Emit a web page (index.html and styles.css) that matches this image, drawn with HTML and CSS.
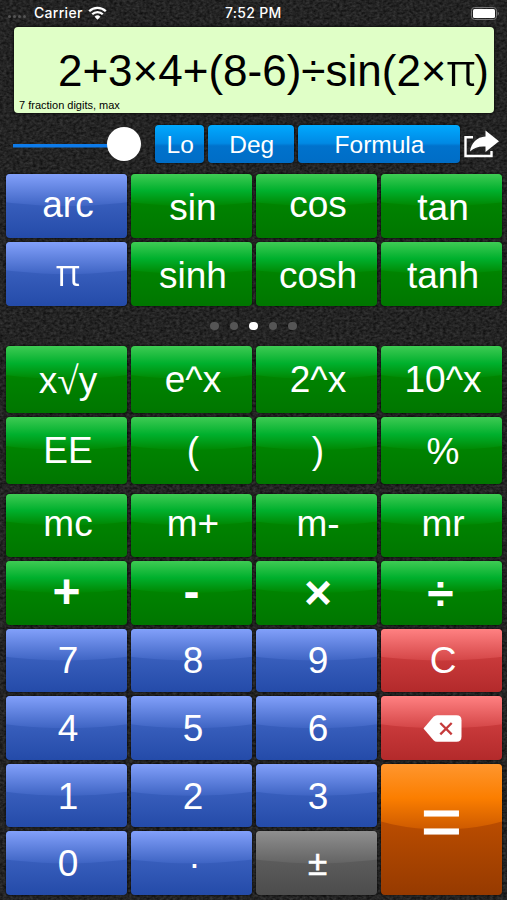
FILE: index.html
```html
<!DOCTYPE html>
<html lang="en">
<head>
    <meta charset="UTF-8">
    <title>Calculator</title>
    <link rel="stylesheet" href="styles.css">
</head>
<body>
<div class="status">
    <div class="status-left">
        <span class="signal"><i></i><i></i><i></i><i></i></span>
        <span class="carrier">Carrier</span>
        <svg class="wifi" viewBox="0 0 19 14" width="19" height="14">
            <path d="M1.2 5.2a11.8 11.8 0 0 1 16.6 0M4.2 8.3a7.5 7.5 0 0 1 10.6 0" fill="none" stroke="#fff" stroke-width="2.3"/>
            <path d="M9.5 13.7L6.6 10.8a4.1 4.1 0 0 1 5.8 0z" fill="#fff"/>
        </svg>
    </div>
    <span class="time">7:52 PM</span>
    <svg class="battery" viewBox="0 0 28 13" width="28" height="13">
        <rect x="0.5" y="0.5" width="25" height="12" rx="3" fill="none" stroke="#777"/>
        <rect x="2" y="2" width="22" height="9" rx="1.5" fill="#fff"/>
        <path d="M26.6 4.5v4a2.2 2.2 0 0 0 0-4z" fill="#777"/>
    </svg>
</div>

<div class="display">
    <p class="formula">2+3×4+(8-6)÷sin(2×<span class="pi">π</span>)</p>
    <p class="hint">7 fraction digits, max</p>
</div>

<div class="toolbar">
    <div class="slider"><span class="thumb"></span></div>
    <div class="tool lo">Lo</div>
    <div class="tool deg">Deg</div>
    <div class="tool form">Formula</div>
    <svg class="share" viewBox="0 0 36 28" width="36" height="28">
        <path d="M9 7.2H1.5V26H27.500V21" fill="none" stroke="#fff" stroke-width="2.4"/>
        <path d="M21.500 0.500L35 11.300L21.500 22V16.500C15 16 10.500 17.500 6 21.500C7 13 13 7 21.500 6.500z" fill="#fff"/>
    </svg>
</div>

<div class="keys trig">
    <div class="key blue up">arc</div>
    <div class="key green low">sin</div>
    <div class="key green up">cos</div>
    <div class="key green low">tan</div>
    <div class="key blue up"><span class="pi">π</span></div>
    <div class="key green low">sinh</div>
    <div class="key green low">cosh</div>
    <div class="key green low">tanh</div>
</div>

<div class="dots"><i></i><i></i><i class="on"></i><i></i><i></i></div>

<div class="keys power">
    <div class="key green low">x<span class="root">√</span>y</div>
    <div class="key green">e^x</div>
    <div class="key green">2^x</div>
    <div class="key green">10^x</div>
    <div class="key green">EE</div>
    <div class="key green">(</div>
    <div class="key green">)</div>
    <div class="key green low">%</div>
</div>

<div class="keys pad">
    <div class="key green up">mc</div>
    <div class="key green up">m+</div>
    <div class="key green up">m-</div>
    <div class="key green up">mr</div>
    <div class="key green op">+</div>
    <div class="key green op">-</div>
    <div class="key green op times">×</div>
    <div class="key green op divide">÷</div>
    <div class="key blue">7</div>
    <div class="key blue">8</div>
    <div class="key blue">9</div>
    <div class="key red">C</div>
    <div class="key blue">4</div>
    <div class="key blue">5</div>
    <div class="key blue">6</div>
    <div class="key red del">
        <svg viewBox="0 0 39 27" width="39" height="27">
            <path d="M0.500 13.500L10.500 1.800Q12 0.300 14 0.300H33.500Q38.500 0.300 38.500 5.300V21.700Q38.500 26.700 33.500 26.700H14Q12 26.700 10.500 25.200z" fill="#fff"/>
            <path d="M17.300 8L28.700 19.400M28.700 8L17.300 19.400" stroke="#c53a3b" stroke-width="2.300"/>
        </svg>
    </div>
    <div class="key blue">1</div>
    <div class="key blue">2</div>
    <div class="key blue">3</div>
    <div class="key orange equals">=</div>
    <div class="key blue">0</div>
    <div class="key blue point">·</div>
    <div class="key gray sign">±</div>
</div>
</body>
</html>
```
FILE: styles.css
```css
*{
    margin: 0;
    padding: 0;
    box-sizing: border-box;
}
body{
    width: 507px;
    height: 900px;
    overflow: hidden;
    color: #fff;
    font-family: "Liberation Sans", Arial, sans-serif;
    /* leather grain */
    background: #222 url("data:image/svg+xml,%3Csvg xmlns='http://www.w3.org/2000/svg' width='507' height='900'%3E%3Cfilter id='g' x='0' y='0' width='100%25' height='100%25' color-interpolation-filters='sRGB'%3E%3CfeTurbulence type='fractalNoise' baseFrequency='0.3 0.4' numOctaves='2' seed='4'/%3E%3CfeColorMatrix values='0.22 0 0 0 0.03 0.22 0 0 0 0.03 0.22 0 0 0 0.03 0 0 0 0 1'/%3E%3C/filter%3E%3Crect width='507' height='900' filter='url(%23g)'/%3E%3C/svg%3E");
}
.status{
    display: flex;
    justify-content: space-between;
    align-items: center;
    height: 26px;
    padding: 0 8px;
    font: 500 14px/26px Inter, sans-serif;
    letter-spacing: 0.3px;
}
.status-left{
    display: flex;
    align-items: center;
    width: 217px;
}
.signal{
    display: flex;
    gap: 2px;
    width: 26px;
    padding-top: 6px;
}
.signal i{
    width: 3px;
    height: 3px;
    border-radius: 50%;
    background: #555;
}
.wifi{
    margin-left: 5px;
}
.time{
    flex: 1;
}
.display{
    display: flex;
    flex-direction: column;
    justify-content: space-between;
    width: 480px;
    height: 86px;
    margin: 0.5px 0 0 14px;
    padding: 21px 5px 2px 5px;
    border-radius: 4px;
    background: #e0ffc7;
    box-shadow: 0 0 2px 1px #111;
    color: #000;
}
.formula{
    font-size: 44px;
    line-height: 44px;
    text-align: right;
    white-space: nowrap;
}
.hint{
    font-size: 11px;
    line-height: 12px;
}
.toolbar{
    display: flex;
    align-items: center;
    height: 39px;
    margin: 12px 0 0 13px;
}
.slider{
    display: flex;
    align-items: center;
    justify-content: flex-end;
    width: 128px;
    height: 39px;
    margin-right: 13.5px;
    background: linear-gradient(#0d7bea, #0d7bea) 0 55% / 110px 3.5px no-repeat;
}
.thumb{
    width: 34px;
    height: 34px;
    border-radius: 50%;
    background: #fff;
}
.tool{
    height: 38.5px;
    margin-right: 4px;
    padding-left: 2px;
    border-radius: 4px;
    background: linear-gradient(#00a9ff, #0089e4 48%, #0072cc 55%, #006dc6);
    box-shadow: 0 0 2px #000;
    font-size: 24.5px;
    line-height: 40px;
    text-align: center;
}
.lo{
    width: 49.5px;
}
.deg{
    width: 85.5px;
}
.form{
    width: 162px;
}
.pi{
    display: inline-block;
    padding: 0 1px;
    font-family: Inter, sans-serif;
    font-weight: 300;
    line-height: 1;
    transform: scaleX(1.12);
}
.keys{
    display: grid;
    grid-template-columns: repeat(4, 121px);
    gap: 4px;
    margin-left: 6px;
}
.trig{
    grid-auto-rows: 64px;
    margin-top: 10.5px;
}
.power{
    grid-auto-rows: 67px;
}
.pad{
    grid-auto-rows: 63.6px;
    margin-top: 10px;
}
.key{
    position: relative;
    display: flex;
    align-items: center;
    justify-content: center;
    padding: 1px 0 0 3px;
    border-radius: 4px;
    box-shadow: 0 0 2px #000;
    overflow: hidden;
    isolation: isolate;
    font-size: 37px;
    line-height: 37px;
}
/* glossy upper half with a curved edge */
.key::before{
    content: "";
    position: absolute;
    inset: 0;
    z-index: -1;
    clip-path: ellipse(105% 50% at 50% 0);
}
.green{
    background: linear-gradient(#008800 40%, #008200 50%, #007600);
}
.green::before{
    background: linear-gradient(#3fcb54, #00b02d 26%, #008600 50%);
}
.blue{
    background: linear-gradient(#3a60be 40%, #244ba9);
}
.blue::before{
    background: linear-gradient(#82a0fa, #3f65c4 50%);
}
.red{
    background: linear-gradient(#c93a3b 45%, #b32a2b);
}
.red::before{
    background: linear-gradient(#ff8182, #d44647 50%);
}
.orange{
    background: linear-gradient(#b94c00 45%, #963a00);
}
.orange::before{
    background: linear-gradient(#ff962e, #fb7e00 26%, #cd5a00 50%);
}
.gray{
    background: linear-gradient(#5c5c5c 45%, #4c4c4c);
}
.gray::before{
    background: linear-gradient(#8f8f8f, #646464 50%);
}
.up{
    padding-bottom: 5px;
}
.low{
    padding-top: 3px;
}
.root{
    font: 39px/37px "Liberation Serif", serif;
}
.op{
    padding: 0 0 3px;
    font-size: 48px;
    font-weight: bold;
}
.times{
    padding: 0 0 1px 3px;
}
.divide{
    padding: 1px 2px 0 0;
}
.point{
    padding-left: 6px;
}
.del{
    padding: 0 0 0 1px;
}
.sign{
    padding: 0 0 2px 2px;
    font-size: 35px;
    -webkit-text-stroke: 0.6px #fff;
}
.equals{
    grid-row: span 2;
    padding: 0 0 13px;
    font-size: 70px;
    -webkit-text-stroke: 1px #fff;
}
.dots{
    display: flex;
    justify-content: center;
    align-items: center;
    gap: 11px;
    height: 39.5px;
}
.dots i{
    width: 8.5px;
    height: 8.5px;
    border-radius: 50%;
    background: #555;
}
.dots .on{
    background: #fff;
}
```
